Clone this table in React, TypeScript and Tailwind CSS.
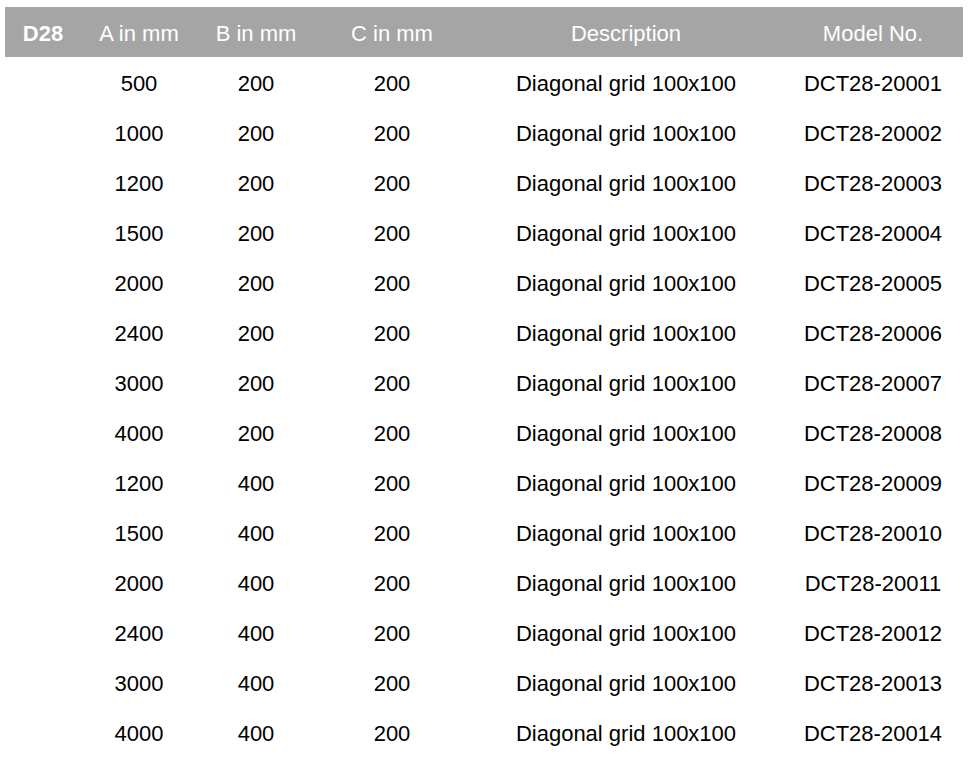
const rows: [string, string, string, string][] = [
  ["500", "200", "200", "DCT28-20001"],
  ["1000", "200", "200", "DCT28-20002"],
  ["1200", "200", "200", "DCT28-20003"],
  ["1500", "200", "200", "DCT28-20004"],
  ["2000", "200", "200", "DCT28-20005"],
  ["2400", "200", "200", "DCT28-20006"],
  ["3000", "200", "200", "DCT28-20007"],
  ["4000", "200", "200", "DCT28-20008"],
  ["1200", "400", "200", "DCT28-20009"],
  ["1500", "400", "200", "DCT28-20010"],
  ["2000", "400", "200", "DCT28-20011"],
  ["2400", "400", "200", "DCT28-20012"],
  ["3000", "400", "200", "DCT28-20013"],
  ["4000", "400", "200", "DCT28-20014"],
];

const cols = "grid grid-cols-[76px_116px_118px_154px_314px_180px]";

export default function App() {
  return (
    <div className="bg-white w-[971px] h-[758px] pt-[7px] pl-[5px] font-['Liberation_Sans',Arial,sans-serif] text-[22px]">
      <div className={`${cols} h-[50px] pt-[3px] items-center bg-[#a5a5a5] text-white text-center w-[958px]`}>
        <div className="font-bold">D28</div>
        <div>A in mm</div>
        <div>B in mm</div>
        <div>C in mm</div>
        <div>Description</div>
        <div>Model No.</div>
      </div>
      {rows.map(([a, b, c, model]) => (
        <div key={model} className={`${cols} h-[50px] pt-[3px] items-center text-black text-center`}>
          <div />
          <div>{a}</div>
          <div>{b}</div>
          <div>{c}</div>
          <div>Diagonal grid 100x100</div>
          <div>{model}</div>
        </div>
      ))}
    </div>
  );
}
